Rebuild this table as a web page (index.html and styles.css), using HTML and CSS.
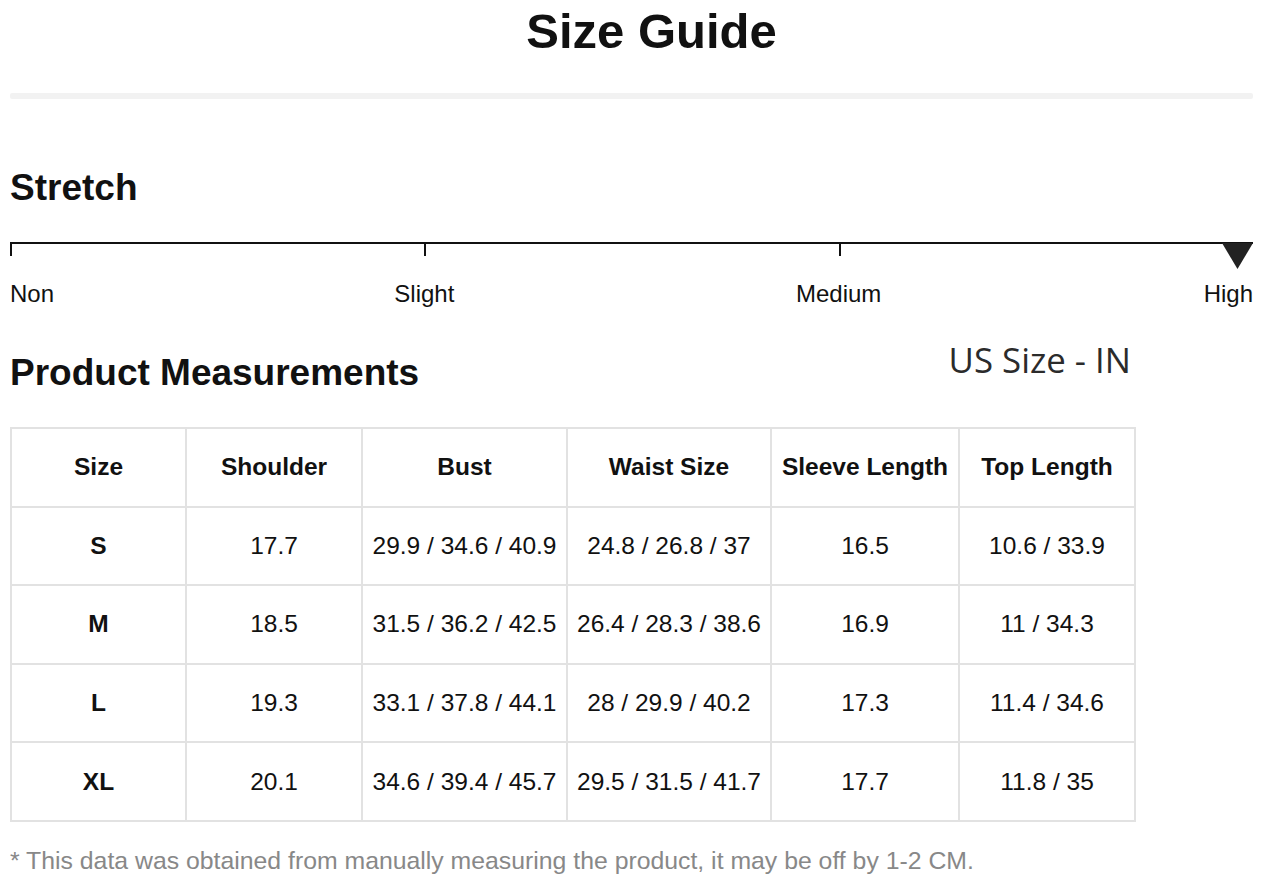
FILE: index.html
```html
<!DOCTYPE html>
<html lang="en">
<head>
<meta charset="utf-8">
<title>Size Guide</title>
<link rel="stylesheet" href="styles.css">
</head>
<body>
<div class="page">
  <h1 class="title">Size Guide</h1>
  <div class="divider"></div>

  <h2 class="section-title stretch-title">Stretch</h2>
  <div class="scale">
    <div class="seg"></div>
    <div class="seg"></div>
    <div class="seg"></div>
    <svg class="marker" width="31" height="26" viewBox="0 0 31 26"><polygon points="0,0 31,0 15.5,26" fill="#222"/></svg>
  </div>
  <div class="scale-labels">
    <span class="lbl lbl-start">Non</span>
    <span class="lbl lbl-mid1">Slight</span>
    <span class="lbl lbl-mid2">Medium</span>
    <span class="lbl lbl-end">High</span>
  </div>

  <div class="pm-head">
    <h2 class="section-title pm-title">Product Measurements</h2>
    <div class="unit">US Size - IN</div>
  </div>

  <table class="sizes">
    <colgroup>
      <col class="c1"><col class="c2"><col class="c3"><col class="c4"><col class="c5"><col class="c6">
    </colgroup>
    <thead>
      <tr><th>Size</th><th>Shoulder</th><th>Bust</th><th>Waist Size</th><th>Sleeve Length</th><th>Top Length</th></tr>
    </thead>
    <tbody>
      <tr><th>S</th><td>17.7</td><td>29.9 / 34.6 / 40.9</td><td>24.8 / 26.8 / 37</td><td>16.5</td><td>10.6 / 33.9</td></tr>
      <tr><th>M</th><td>18.5</td><td>31.5 / 36.2 / 42.5</td><td>26.4 / 28.3 / 38.6</td><td>16.9</td><td>11 / 34.3</td></tr>
      <tr><th>L</th><td>19.3</td><td>33.1 / 37.8 / 44.1</td><td>28 / 29.9 / 40.2</td><td>17.3</td><td>11.4 / 34.6</td></tr>
      <tr><th>XL</th><td>20.1</td><td>34.6 / 39.4 / 45.7</td><td>29.5 / 31.5 / 41.7</td><td>17.7</td><td>11.8 / 35</td></tr>
    </tbody>
  </table>

  <p class="note">* This data was obtained from manually measuring the product, it may be off by 1-2 CM.</p>
</div>
</body>
</html>
```
FILE: styles.css
```css
html, body {
  margin: 0;
  padding: 0;
  background: #fff;
}
body {
  font-family: "Liberation Sans", Arial, sans-serif;
  color: #111;
}
.page {
  padding: 0 9px 0 10px;
}
.title {
  margin: 3px 0 0 0;
  padding-left: 40px;
  font-size: 49px;
  line-height: 56px;
  font-weight: bold;
  text-align: center;
  color: #111;
}
.divider {
  margin-top: 34px;
  height: 6px;
  background: #f2f2f2;
  border-radius: 2px;
}
.section-title {
  margin: 0;
  font-size: 37px;
  line-height: 44px;
  font-weight: bold;
  color: #111;
}
.stretch-title {
  margin-top: 67px;
}
.scale {
  position: relative;
  margin-top: 32px;
  display: flex;
  border-top: 2px solid #111;
}
.seg {
  flex: 1;
  height: 12px;
  border-left: 2px solid #111;
}
.marker {
  position: absolute;
  right: 0;
  top: -1px;
}
.scale-labels {
  margin-top: 24px;
  display: grid;
  grid-template-columns: repeat(6, 1fr);
  font-size: 24px;
  line-height: 28px;
  color: #111;
}
.lbl-start { grid-column: 1 / 2; text-align: left; }
.lbl-mid1 { grid-column: 2 / 4; text-align: center; }
.lbl-mid2 { grid-column: 4 / 6; text-align: center; }
.lbl-end { grid-column: 6 / 7; text-align: right; }

.pm-head {
  margin-top: 32px;
  width: 1121px;
  display: flex;
  justify-content: space-between;
  align-items: flex-start;
}
.pm-title {
  margin-top: 11px;
}
.unit {
  font-family: "Open Sans", "Noto Sans", sans-serif;
  font-size: 34.8px;
  line-height: 40px;
  color: #2b2b2b;
}

.sizes {
  margin-top: 32px;
  border-collapse: separate;
  border-spacing: 0;
  table-layout: fixed;
  width: 1126px;
  border-top: 2px solid #e2e2e2;
  border-left: 2px solid #e2e2e2;
}
.c1 { width: 175px; }
.c2 { width: 176px; }
.c3 { width: 205px; }
.c4 { width: 204px; }
.c5 { width: 188px; }
.c6 { width: 176px; }
.sizes th, .sizes td {
  height: 76.6px;
  padding: 0;
  border-right: 2px solid #e2e2e2;
  border-bottom: 2px solid #e2e2e2;
  text-align: center;
  vertical-align: middle;
  font-size: 24.5px;
  color: #111;
  white-space: nowrap;
}
.sizes th {
  font-weight: bold;
}
.sizes td {
  font-weight: normal;
}
.note {
  margin: 25px 0 0 0;
  font-size: 24.8px;
  line-height: 28px;
  color: #888;
}
```
